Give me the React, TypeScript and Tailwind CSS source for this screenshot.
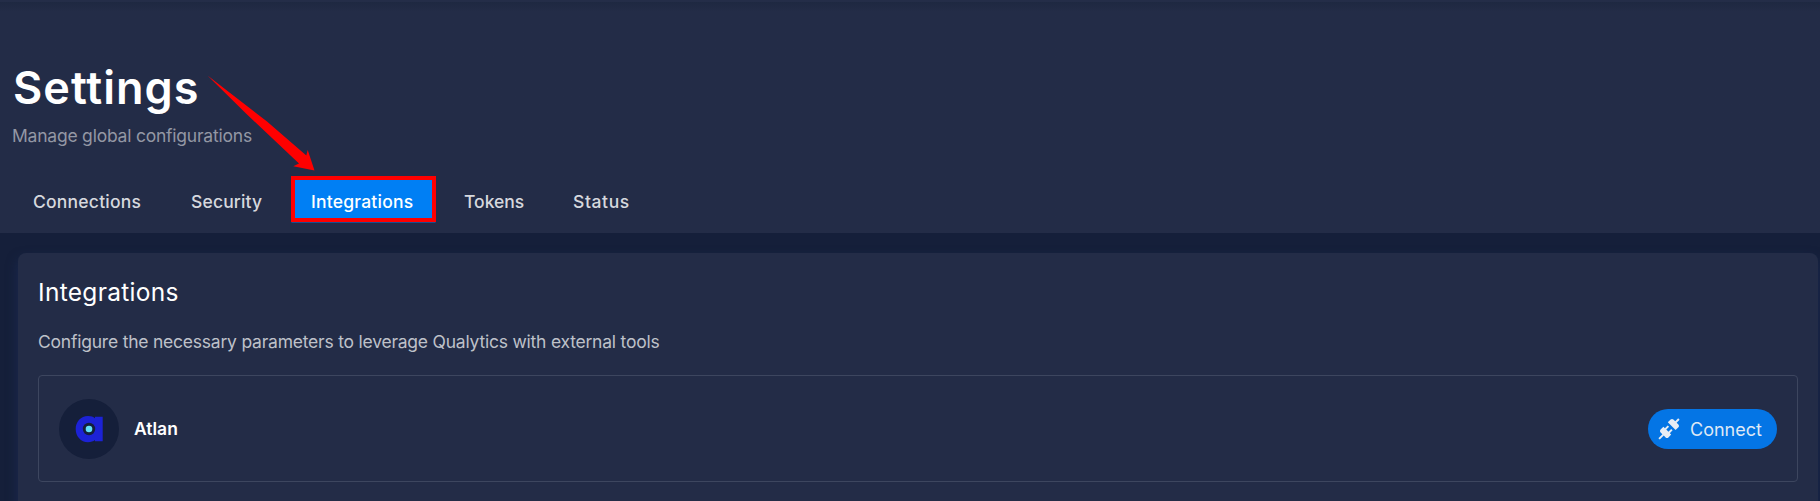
import React from "react";

export default function App() {
  return (
    <div className="flex h-[501px] w-[1820px] flex-col overflow-hidden bg-[#151f3a] font-['Inter',sans-serif] text-white">
      <div className="h-[2px] shrink-0 bg-[#242d48]" />
      <header className="relative flex h-[231px] shrink-0 flex-col bg-linear-to-b from-[#1e2841] to-[#232c47] to-[10px]">
        <h1 className="mt-[59px] ml-[13px] h-[54px] w-fit text-[45px] leading-[54px] font-semibold tracking-[1px]">Settings</h1>
        <p className="mt-[9px] ml-[12px] h-[24px] w-fit text-[17.5px] leading-[24px] tracking-[-0.22px] text-[#9397a4]">Manage global configurations</p>
        <nav className="mt-[28px] flex h-[46px] items-center text-[17.5px] font-medium text-[#d6d8de]">
          <a className="ml-[33px] w-[158px] pt-[6px] tracking-[0.22px]">Connections</a>
          <a className="w-[100px] pt-[6px] tracking-[0.15px]">Security</a>
          <a className="flex h-[46px] w-[145px] items-center border-4 border-[#ff0000] bg-[#007ff4] pt-[6px] pl-[16px] tracking-[0.22px] text-white shadow-[0_1px_0_-0.5px_#0f72dc]">Integrations</a>
          <a className="ml-[28px] w-[109px] pt-[6px] tracking-[0px]">Tokens</a>
          <a className="pt-[6px] tracking-[0.6px]">Status</a>
        </nav>
        <svg className="absolute top-[68px] left-[200px]" width="120" height="106" viewBox="200 70 120 106">
          <path d="M207.500 75.500L267 121.500L306.300 155.500L307.700 150L314.500 170.500L293.300 166.300L299 163.500L246 113.500Z" fill="#f00" />
        </svg>
      </header>
      <main className="flex-1 pt-[20px] pl-[18px]">
        <section className="h-[300px] w-[1800px] rounded-t-[8px] bg-[#232c47] px-[20px] pt-[22px] shadow-[0_6px_12px_rgba(28,45,90,0.7)]">
          <h2 className="h-[34px] w-fit text-[24.5px] leading-[34px] tracking-[0.3px]">Integrations</h2>
          <p className="mt-[21px] h-[24px] w-fit text-[17.5px] leading-[24px] tracking-[-0.22px] text-[#bec1c9]">Configure the necessary parameters to leverage Qualytics with external tools</p>
          <div className="mt-[21px] flex h-[107px] w-[1760px] items-center rounded-[4px] border border-[#3d465f] pr-[20px] pl-[20px]">
            <div className="flex size-[60px] items-center justify-center rounded-full bg-[#151f3a]">
              <svg width="28" height="28" viewBox="0 0 28 28">
                <path d="M13 1C5.8 1 .7 6.700 .7 14S5.800 27.200 13 27.200C16 27.200 18.300 26.300 20 25V26.300H27.700V1.700H20V3.200C18.300 1.800 16 1 13 1Z" fill="#1c22d6" />
                <circle cx="14" cy="14" r="6.200" fill="#151f3a" />
                <circle cx="14" cy="14" r="3.300" fill="#62e1fc" />
              </svg>
            </div>
            <span className="ml-[15px] pt-[2px] text-[17.5px] font-semibold tracking-[0px]">Atlan</span>
            <button className="ml-auto flex h-[40px] w-[129px] items-center rounded-full bg-[#0475e5] pl-[9px] text-[18px] tracking-[0px] text-[#dfe8f5]">
              <svg width="24" height="24" viewBox="0 0 24 24" fill="#e9edf4">
                <path d="M21.4 7.5C22.2 8.3 22.2 9.6 21.4 10.3L18.6 13.1L10.8 5.3L13.6 2.5C14.4 1.7 15.7 1.7 16.4 2.5L18.2 4.3L21.2 1.3L22.6 2.7L19.6 5.7L21.4 7.5M15.6 13.3L14.2 11.9L11.4 14.7L9.3 12.6L12.1 9.800L10.700 8.400L7.900 11.200L6.400 9.800L3.600 12.600C2.800 13.400 2.800 14.700 3.600 15.400L5.400 17.200L1.400 21.200L2.800 22.600L6.800 18.600L8.600 20.400C9.400 21.200 10.700 21.200 11.400 20.400L14.200 17.600L12.800 16.200L15.600 13.300Z" />
              </svg>
              <span className="ml-[9px] pt-[2px]">Connect</span>
            </button>
          </div>
        </section>
      </main>
    </div>
  );
}
